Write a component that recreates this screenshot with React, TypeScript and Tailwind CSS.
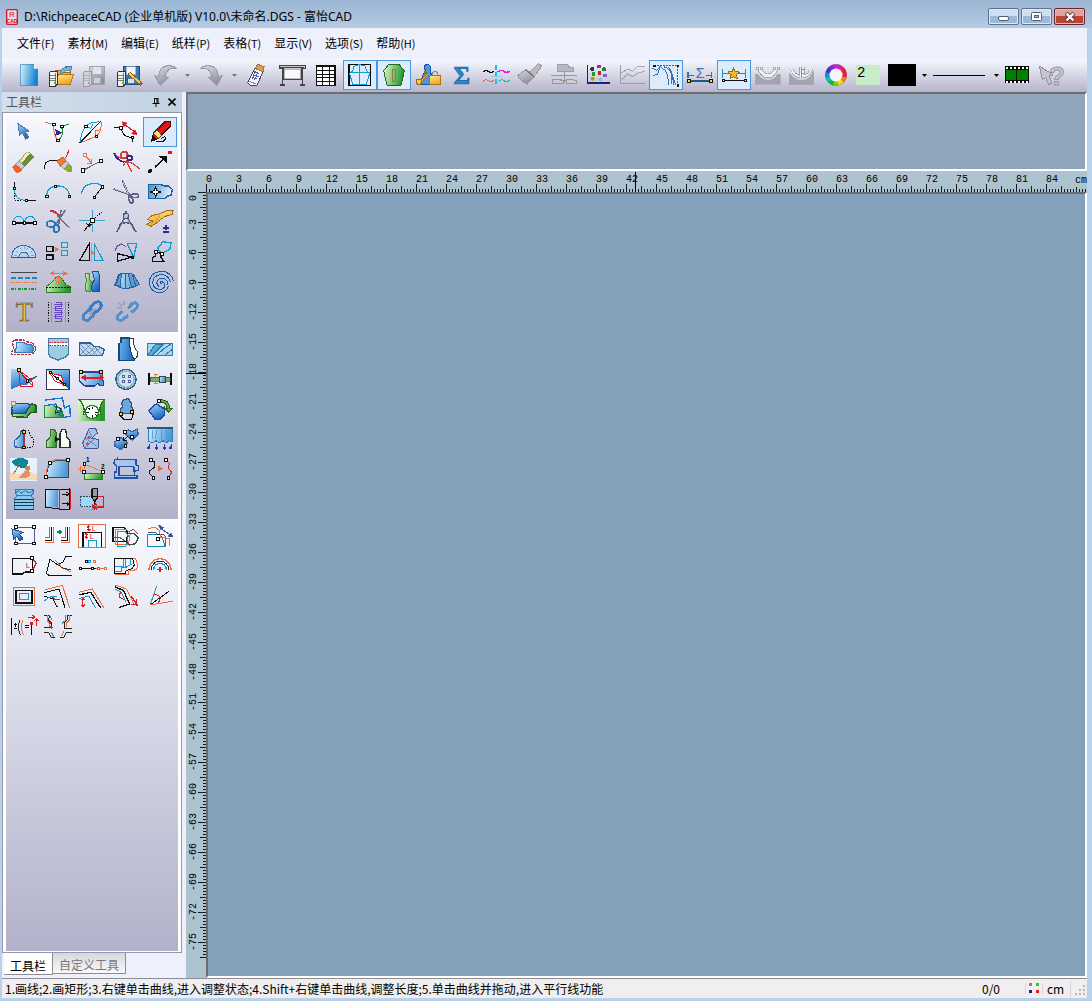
import { useState } from "react"
import type { ReactNode } from "react"

type Tool = {
  name: string
  art: ReactNode
}

// -------------------------
// Drawing helpers (a cell is 102 x 90 units, three to a pixel)
// -------------------------

function P({ d, c = "#111", f = "none", w = 3, dash }: { d: string; c?: string; f?: string; w?: number; dash?: string }) {
  return <path d={d} stroke={c} fill={f} strokeWidth={w} strokeDasharray={dash} />
}

function Nodes({ at, c = "#111", f = "#fff", r = 4 }: { at: number[][]; c?: string; f?: string; r?: number }) {
  return (
    <>
      {at.map(([x, y]) => (
        <rect key={`${x}-${y}`} x={x - r} y={y - r} width={r * 2} height={r * 2} fill={f} stroke={c} strokeWidth={3} />
      ))}
    </>
  )
}

function Dots({ at, r = 5 }: { at: [number, number, string][]; r?: number }) {
  return (
    <>
      {at.map(([x, y, c]) => (
        <circle key={`${x}-${y}`} cx={x} cy={y} r={r} fill={c} />
      ))}
    </>
  )
}

function Art({ children }: { children: ReactNode }) {
  return (
    <svg viewBox="0 0 102 90" className="h-[30px] w-[34px] shrink-0" shapeRendering="crispEdges" aria-hidden="true">
      {children}
    </svg>
  )
}

const BLUE = "url(#blue)"
const BLUE2 = "url(#blueDown)"
const GREEN = "url(#green)"
const GRAY = "url(#gray)"
const GOLD = "url(#gold)"

const ORANGE = "#f0703c"
const RED = "#dc1c24"
const CYAN = "#109cd0"
const NAVY = "#2c2c8c"
const STEEL = "#3870b0"
const YELLOW = "#f8ec20"

function Server({ gray = false }: { gray?: boolean }) {
  return (
    <>
      <P d="M13 38L20 33H38V72L32 78H13Z" c={gray ? "#9c9ca6" : "#333"} f={gray ? "#d4d4dc" : "#f4f4ee"} />
      <P d="M14 46H32M14 54H32M14 61H32M32 40V76" c={gray ? "#a4a4ac" : "#444"} w={2} />
      <rect x="26" y="67" width="5" height="5" fill={gray ? "#999" : "#18c818"} />
    </>
  )
}

function Scissors({ c = "#5c6488" }: { c?: string }) {
  return (
    <>
      <P d="M14 36L66 54M40 10L62 60" c={c} w={6} />
      <P d="M18 36L60 50M42 14L58 52" c="#e4e8f4" w={2} />
      <ellipse cx="78" cy="56" rx="11" ry="6" fill="none" stroke={c} strokeWidth="5" />
      <ellipse cx="66" cy="69" rx="6" ry="10" fill="none" stroke={c} strokeWidth="5" transform="rotate(-25 66 69)" />
    </>
  )
}

function Eraser() {
  return (
    <>
      <P d="M17 61L60 16Q64 13 68 17L81 29L37 76Z" c="#806c38" f="#e8e470" w={2} />
      <P d="M62 17L81 29L42 71L34 64Z" c="none" f="#68903c" />
      <P d="M50 27L62 15L69 20L44 47Z" c="none" f="#f8f4b0" />
      <P d="M36 42L53 58L43 68L26 53Z" c="#889" f="#c8ccd4" w={2} />
      <P d="M17 61L26 52L43 68L36 76L28 76Z" c="#d04010" f="#f86420" w={2} />
    </>
  )
}

// -------------------------
// Main toolbar
// -------------------------

const fileTools: Tool[] = [
  { name: "新建", art: <><P d="M29 13H70L80 24V77H29Z" c="#3c84c0" f="url(#page)" w={2} /><P d="M69 13V24H80Z" c="#fff" f="#d8f0ff" w={2} /></> },
  {
    name: "打开", art: <>
      <P d="M31 30H48L53 36H76V70H31Z" c="#a06c10" f="#f0b840" />
      <P d="M40 44H85L76 72H32Z" c="#b07818" f={GOLD} />
      <P d="M44 40Q48 20 66 24L60 19L81 18L77 36L72 31Q60 28 52 40Z" c="#40688c" f="#70b4dc" w={2} /><Server />
    </>
  },
  { name: "保存", art: <><P d="M30 18H77V72H30Z" c="#a0a0ac" f={GRAY} /><P d="M39 20H68V42H39Z" c="#aaa" f="#e4e4ec" w={2} /><P d="M42 52H65V71H42Z" c="#999" f="#ccd" w={2} /><Server gray /></> },
  {
    name: "另存为", art: <>
      <P d="M30 18H78V72H30Z" c="#204c78" f="#3878b4" /><P d="M40 20H68V44H40Z" c="#84a4c0" f="#f0f4fc" w={2} />
      <P d="M44 54H65V71H44Z" c="#204c78" f="#d8e0e8" w={2} /><Server />
      <P d="M47 38L82 70" c="#8c5c18" w={10} /><P d="M48 39L80 68" c="#f8c848" w={6} /><P d="M80 68L87 75" c="#c84c3c" w={9} />
    </>
  }
]

const undoArt = <P d="M88 25Q62 20 54 49L64 52L39 76L24 47L34 50Q38 16 66 17Q80 17 88 25Z" c="#9c9ca8" f={GRAY} />

const redoArt = <P d="M20 25Q46 20 54 49L44 52L69 76L84 47L74 50Q70 16 42 17Q28 17 20 25Z" c="#9c9ca8" f={GRAY} />

type ViewTool = Tool & { on?: boolean }

const viewTools: ViewTool[] = [
  {
    name: "橡皮擦", art: <>
      <P d="M20 68L42 25L66 35L48 76L28 77Z" c="#404468" f="#f4f6fc" /><P d="M42 25L50 13L69 20L66 36Z" c="#907c50" f="#f49830" />
      <P d="M39 36L55 41M35 44L53 50M32 52L49 57M43 32L33 58M51 36L41 60" c="#505c9c" w={3} /><P d="M25 64L45 72" c="#8890b0" />
    </>
  },
  {
    name: "绘图仪", art: <>
      <P d="M14 17H90V26H80L80 57H25L25 26H14Z" c="#444" f="#c8c8c8" /><P d="M28 28H76V56H28Z" c="#999" f="#f8f8fc" w={2} />
      <P d="M16 22H88" c="#444" w={3} /><P d="M22 26V74M82 26V74M16 75H30M76 75H90M22 58H82" c="#444" w={4} />
    </>
  },
  { name: "规格表", art: <><P d="M23 18H78V76H23Z" f="#fff" w={4} /><P d="M23 30H78M23 42H78M23 53H78M23 65H78M41 18V76M60 18V76" /></> },
  {
    name: "显示结构线", on: true, art: <>
      <P d="M18 13H82V76H18Z" c="#080808" w={4} /><P d="M50 13V76M20 38H80M33 19Q30 36 20 40L29 74H70L80 40Q68 34 68 19Q50 10 33 19" c={CYAN} />
    </>
  },
  { name: "显示样片", on: true, art: <><P d="M36 12H65L82 32L72 76H30L20 32Z" c="#206c20" f={GREEN} /><P d="M45 29H54V67M45 29V64H54" c="#a07838" /></> },
  {
    name: "加密", art: <>
      <P d="M43 31Q34 15 50 13Q64 16 57 33L62 45L85 50V72Q62 78 28 72L37 43Z" c="#1858a0" f="#4898e0" />
      <P d="M50 42L26 70M30 65L22 58M50 42l-12 -3" c="#a86c10" w={7} /><P d="M49 43L27 68" c="#f8c840" w={3} /><circle cx="24" cy="65" r="8" fill="#f8c840" stroke="#a06c10" strokeWidth="3" />
      <P d="M64 48V40Q72 28 80 40V48" c="#888" w={4} /><P d="M56 47H87V74H56Z" c="#b07010" f={GOLD} />
    </>
  },
  { name: "合计", art: <text x="50" y="71" textAnchor="middle" fontSize="76" fontFamily="Liberation Serif, serif" fontWeight="bold" fill="#208cd0" stroke="#185c9c" strokeWidth="2">Σ</text> },
  {
    name: "对称线", art: <>
      <P d="M12 36Q20 28 28 34T45 34" w={4} /><P d="M56 36Q66 28 74 34T92 34" c="#e818d0" w={4} /><P d="M12 64Q20 56 28 62T45 60" c="#d87078" /><P d="M58 64Q67 56 75 62T92 61" c="#20c0b0" />
      <P d="M51 14V76" c="#18bce8" w={5} dash="16 5" /><P d="M36 48H66" c="#90cce0" w={3} />
    </>
  },
  { name: "刷新", art: <><P d="M50 36L77 11L87 18L66 46" c="#999" f="#bbb" /><P d="M14 47L40 28L65 49L43 72Q24 66 14 47Z" c="#999" f={GRAY} /><P d="M38 30L65 51" c="#777" w={4} /></> },
  {
    name: "展开", art: <>
      <P d="M30 14H63L67 21H78V34H30Z" c="#a0a0ac" f="#b8b8c4" /><P d="M12 46H90M51 34V66M43 58L51 67L59 58" c="#999" /><P d="M17 57H37L42 62H48V71H17ZM57 57H78L82 62H88V71H57Z" c="#999" f="#ccccd6" />
    </>
  },
  {
    name: "散点图", art: <>
      <P d="M19 14V68H87" c="#202070" w={5} />
      <Dots at={[[34, 27, "#333"], [54, 20, "#b020a0"], [69, 28, "#208030"], [38, 42, "#18a030"], [56, 39, "#c02828"], [72, 47, "#8060d0"], [35, 56, "#b89020"], [58, 58, "#70d0d0"]]} r={6} />
    </>
  },
  { name: "曲线图", art: <><P d="M17 14V70H90" c="#9c9ca8" w={4} /><P d="M20 39L38 27L52 34L68 20L90 19M20 59L38 42L53 50L70 38L90 34" c="#a8a8b0" /></> },
  {
    name: "自动标注", on: true, art: <>
      <P d="M16 17H86M85 17V76" w={2} dash="6 3" /><P d="M10 25L24 31L34 18M34 18L26 42L11 47M34 18L40 26Q58 30 58 74M44 20Q66 26 68 48L66 72M56 20Q70 30 74 75M64 28L80 76" c={STEEL} w={3} /><Nodes at={[[16, 17], [86, 17], [86, 76]]} f="#080808" r={2} />
    </>
  },
  {
    name: "线长", art: <>
      <P d="M15 36V55M86 36V55M15 46H34M68 46H86" c={STEEL} w={4} /><text x="51" y="53" textAnchor="middle" fontSize="42" fontFamily="Liberation Sans, sans-serif" fill="#3870b0">Σ</text><P d="M15 63H86" c="#205888" w={5} /><Nodes at={[[17, 63], [84, 63]]} f={YELLOW} />
    </>
  },
  {
    name: "显示线长", on: true, art: <>
      <P d="M17 28V53M86 28V53M17 40H38M63 40H86" c="#1898b8" w={4} /><P d="M50 24L55 35L67 36L58 44L61 56L50 50L39 56L42 44L33 36L45 35Z" c="#907020" f="#fcbc20" /><P d="M19 62H84" w={3} /><Nodes at={[[19, 62], [84, 62]]} r={3} />
    </>
  },
  { name: "凹形", art: <><P d="M12 42H20Q30 60 50 61Q72 60 80 42H87V73H12Z" c="#a8a8b2" f="#a4a4ae" w={2} /><P d="M25 25Q34 47 51 48Q68 47 76 25" c="#a4a4ae" w={14} /><P d="M25 25Q34 47 51 48Q68 47 76 25" c="#f0f0f4" w={9} /><Nodes at={[[18, 26], [32, 26], [69, 26], [82, 26]]} c="#aaa" r={3} /></> },
  { name: "分割", art: <><P d="M13 38Q28 60 43 61H56Q74 58 86 34V74H13Z" c="#a8a8b2" f="#a4a4ae" w={2} /><P d="M20 27Q28 48 46 50V22M80 27Q72 48 54 50V22" c="#a4a4ae" w={10} /><P d="M20 27Q28 48 46 50V22M80 27Q72 48 54 50V22" c="#f0f0f4" w={5} /><P d="M50 20V55M50 28H60M50 39H58" c="#909098" /></> }
]

// -------------------------
// Tool palette
// -------------------------

const drawTools: Tool[] = [
  { name: "选择", art: <P d="M33 20L38 55L46 47L56 66L65 61L55 44L66 42Z" c="#5078a8" f={BLUE2} /> },
  {
    name: "调整", art: <>
      <P d="M12 17L38 20Q36 50 50 70" c={ORANGE} /><P d="M84 21L62 28Q70 58 50 70" c="#208838" /><P d="M43 38L62 47L43 55L48 47Z" c={NAVY} f={NAVY} /><Nodes at={[[39, 22], [62, 28], [50, 70]]} />
    </>
  },
  {
    name: "合并调整", art: <>
      <P d="M14 78L78 12" w={3} /><P d="M72 15Q42 14 34 28Q18 42 16 76" c={CYAN} /><P d="M34 28L48 34L54 22" c={CYAN} /><P d="M78 14Q82 44 63 58L17 77M63 58L60 42L76 38" c={ORANGE} /><Nodes at={[[32, 28], [64, 58]]} />
    </>
  },
  { name: "对称调整", art: <><P d="M14 30L36 32Q41 63 70 61L72 76" /><P d="M46 22L80 47" c={RED} w={4} /><P d="M38 14L55 18L45 29ZM84 53L68 50L78 38Z" c={RED} f={RED} w={2} /><Nodes at={[[36, 32], [70, 61]]} /></> },
  {
    name: "智能笔", art: <>
      <P d="M54 65Q68 54 68 65Q62 78 38 74" /><P d="M25 73L31 49L66 13L82 14L82 28L46 64Z" c="#401010" f="#e01818" /><P d="M31 49L43 40L56 55L46 64Z" c="#604820" f="#f8e070" w={2} /><P d="M25 73L29 58L39 67Z" f="#111" /><P d="M43 40L67 15" c="#801010" w={3} /><P d="M64 46L82 28" c="#300" w={5} />
    </>
  },
  { name: "橡皮擦", art: <Eraser /> },
  { name: "擦除线段", art: <><P d="M10 66Q10 42 28 41L56 42" /><P d="M84 10Q79 22 73 34" c={RED} /><P d="M47 41L66 30L76 42L60 60Z" c="#a04010" f="#f87830" w={2} /><P d="M76 42L60 58L68 66L84 49Z" c="#889" f="#ccd" w={2} /><P d="M84 49L92 58V75H80L68 66Z" c="none" f="#90a840" /></> },
  { name: "加点", art: <><P d="M24 70L78 42" c="#666" /><P d="M34 29L48 46M50 36V50H36" c={ORANGE} w={4} /><Nodes at={[[30, 24]]} c={ORANGE} r={5} /><Nodes at={[[24, 70], [78, 42]]} r={5} /></> },
  {
    name: "剪断线", art: <>
      <P d="M16 18Q28 38 50 32M52 43L70 49L92 65M43 58L48 48L52 43L68 74" c="#d83c40" w={4} /><P d="M15 18Q20 38 46 46" c={NAVY} w={5} /><circle cx="46" cy="24" r="10" fill="none" stroke="#d83c40" strokeWidth="6" /><circle cx="62" cy="33" r="7" fill="none" stroke={NAVY} strokeWidth="6" />
    </>
  },
  { name: "连接点", art: <><P d="M36 60L65 34" w={5} /><P d="M52 29H71V47Z" f="#111" /><Dots at={[[21, 72, "#111"], [81, 17, "#f01010"]]} r={6} /></> },
  { name: "圆角", art: <><P d="M22 15V70H58" dash="4 4" /><P d="M22 15V34M58 70H86" /><P d="M22 34Q22 70 58 70" c={CYAN} /><Nodes at={[[22, 34], [58, 70]]} r={3} /></> },
  { name: "三点弧线", art: <><P d="M17 58C16 16 86 16 85 58" c={CYAN} w={4} /><Nodes at={[[17, 58], [43, 28], [85, 58]]} /></> },
  { name: "角度线", art: <><P d="M19 50C25 14 70 14 82 29" c={CYAN} w={4} /><P d="M82 29L58 61" /><Nodes at={[[82, 29], [58, 61]]} /></> },
  { name: "剪刀", art: <Scissors /> },
  { name: "拾取样片", art: <><P d="M17 23H54L65 27H77L88 37L84 55L71 58L65 65H17Z" c="#1c609c" f="url(#piece)" w={4} /><P d="M38 29L42 41L54 45L42 49L38 61L34 49L22 45L34 41Z" f="#fff" /></> },
  { name: "等分规", art: <><P d="M18 48C16 22 52 22 52 48C52 22 88 22 85 48" c={CYAN} w={3} /><P d="M18 48H86" w={4} /><Nodes at={[[20, 48], [52, 48], [84, 48]]} /></> },
  {
    name: "剪断", art: <>
      <P d="M28 12Q45 12 55 28" c="#e02830" w={6} /><P d="M50 28L86 62" c="#90686c" w={4} /><P d="M73 9L42 56M60 9L52 56" c="#5c7098" w={5} /><ellipse cx="30" cy="51" rx="13" ry="9" fill="none" stroke="#2878b8" strokeWidth="6" /><ellipse cx="46" cy="65" rx="8" ry="11" fill="none" stroke="#2878b8" strokeWidth="6" />
    </>
  },
  { name: "垂直线", art: <><P d="M12 40H90M52 10V76" c="#30a8cc" /><P d="M27 72L52 40M34 49L42 58L50 51" /><P d="M54 38L84 12" dash="4 4" /><Nodes at={[[52, 40]]} r={5} /></> },
  { name: "圆规", art: <><P d="M51 12V25M50 28L23 75M52 28L81 75M31 54Q51 38 72 55" c="#505878" w={5} /><P d="M48 35L33 61M54 35L70 61" c="#a4b8dc" w={2} /><circle cx="51" cy="27" r="8" fill="#adc4e4" stroke="#505878" strokeWidth="4" /></> },
  { name: "比较长度", art: <><P d="M14 38Q20 24 48 21L72 11H90L87 23Q65 24 42 47L24 58L12 52L30 42Z" c="#a06818" f={GOLD} /><P d="M20 53Q40 42 52 23M33 26L49 45" c="#e4a028" /><P d="M61 63H77M69 53V70M61 75H77" c={NAVY} w={4} /></> },
  { name: "量角器", art: <><P d="M14 62Q15 27 50 25Q85 28 87 62H65Q62 45 50 45Q38 45 35 62Z" c="#3c6cac" f="#c0dcf4" /><P d="M12 62H88" c="#2858a0" w={4} /><P d="M22 56L29 57M27 42L34 47M39 32L43 39M51 28V36M63 32L59 39M76 42L69 47M81 56L73 57" c="#6088b8" w={2} /></> },
  { name: "旋转复制", art: <><P d="M16 28H36V43H16ZM17 54H36V68H17Z" w={4} /><P d="M60 17H80V30H60ZM60 41H80V55H60Z" c={CYAN} /><P d="M42 31L53 37L42 43Z" c={ORANGE} f={ORANGE} /></> },
  { name: "对称复制", art: <><P d="M43 20V70H14Z" w={4} /><P d="M58 20V70H84Z" c={CYAN} /><P d="M48 40L57 47L48 54Z" c={ORANGE} f={ORANGE} /><P d="M50 18V74" c="#999" w={2} /></> },
  { name: "移动复制", art: <><P d="M25 50L69 60L25 73Z" w={4} /><P d="M55 20H83L74 62Z" c={CYAN} w={4} /><P d="M19 42Q22 24 38 21M21 31L36 21L50 28" c="#7050a8" w={4} /><Nodes at={[[70, 62]]} r={3} f="#111" /></> },
  { name: "对接", art: <><P d="M44 34L60 14L84 18L80 38L56 50Z" c={CYAN} w={4} /><P d="M38 45L56 50L54 62L64 74H28V61L38 57Z" w={4} /><Nodes at={[[38, 44], [56, 51]]} /></> },
  { name: "线型", art: <><P d="M12 17H90" c="#444" w={4} /><P d="M12 33H90" c="#1888c8" w={4} dash="16 5" /><P d="M12 47H90" c={ORANGE} w={4} dash="5 3" /><P d="M12 66H90" c="#189828" w={4} dash="9 4 3 4" /></> },
  { name: "褶展开", art: <><P d="M15 75V59L31 48L45 31Q52 28 59 31L76 55L89 59V75Z" c="#288028" f={GREEN} /><P d="M15 61H89" dash="5 4" /><P d="M53 28V50M39 33L48 48M66 33L58 48" c={ORANGE} /><P d="M34 19H71" c={ORANGE} w={4} /><P d="M28 19L38 14V24ZM78 19L68 14V24Z" c={ORANGE} f={ORANGE} /></> },
  { name: "分割展开", art: <><P d="M31 18H42L45 39L54 46V64L45 75L31 71V53L35 45Z" c="#488830" f={GREEN} /><P d="M52 13H69L73 25V73H52L49 59L58 38Z" c="#2048a0" f={BLUE2} /></> },
  { name: "荷叶边", art: <><P d="M29 22L39 19L64 19L74 24L91 52L75 60L57 64H43L17 55Z" c="#28649c" f={BLUE} /><P d="M37 23L34 59L20 54L31 25ZM57 20L68 60L80 56L71 25" c="#28649c" f="#6898cc" /><P d="M48 20V63" c="#28649c" /></> },
  { name: "螺旋", art: <><P d="M87 44Q80 17 52 18Q24 22 24 48Q27 73 54 72Q73 68 70 49Q64 35 49 41Q43 48 52 55" c="#28549c" w={13} /><P d="M87 44Q80 17 52 18Q24 22 24 48Q27 73 54 72Q73 68 70 49Q64 35 49 41Q43 48 52 55" c="#a4c8ec" w={7} /></> },
  { name: "加文字", art: <text x="52" y="73" textAnchor="middle" fontSize="84" fontFamily="Liberation Serif, serif" fill="#ecc040" stroke="#605028" strokeWidth="2">T</text> },
  { name: "比例尺", art: <><P d="M23 14V76M81 14V76" dash="4 4" /><P d="M31 15V75M74 15V75" c="#38b8d8" /><P d="M44 16H62V28H44V40H62V52H44V64H62V74H42M40 22H66M40 34H66M40 46H66M40 58H66" c="#6848c8" /></> },
  {
    name: "链接", art: <>
      <rect x="22" y="43" width="38" height="22" rx="11" fill="none" stroke="#4888c4" strokeWidth="9" transform="rotate(-44 41 54)" /><rect x="43" y="20" width="38" height="22" rx="11" fill="none" stroke="#3c7cc0" strokeWidth="9" transform="rotate(-44 62 31)" /><P d="M42 53L61 35" c="#a4a4b0" w={8} />
    </>
  },
  { name: "断开链接", art: <><path d="M40 42L28 54Q20 66 32 70Q38 72 58 55M57 34L70 20Q83 13 85 25Q86 33 66 47" fill="none" stroke="#5890c8" strokeWidth="9" /><P d="M45 13V25M25 33H38M29 18L39 28" c="#a4a4b0" w={6} /></> }
]

const patternTools: Tool[] = [
  { name: "缝份", art: <><P d="M16 23L23 18H51L62 24L76 25L88 45L80 57L68 62H13L15 53L20 42Z" c="#d02828" w={4} dash="8 3" /><P d="M28 25H49L61 31H74L80 44L75 55H24V47L29 42Z" c="#3878bc" f={BLUE} w={4} /></> },
  { name: "袋", art: <><P d="M23 13H83V61L73 70L51 78L29 70L23 61Z" c="#4878a0" f="#9cccdf" w={4} /><P d="M25 26H81V35H25Z" c="none" f="#fff" /><P d="M24 26H82M24 35H82" c={RED} dash="5 3" /></> },
  { name: "面料", art: <><P d="M14 27H48L57 38H71L88 47L82 65H14Z" c="#3c5c88" f="#c0d8f0" w={4} /><P d="M14 42L35 64M14 28L50 64M31 27L67 64M49 29L82 63M31 64L65 37M14 64L49 29M50 64L76 40" c="#4870a0" w={2} /></> },
  { name: "衣身", art: <><P d="M30 79V29L36 25V12H61Q59 48 73 57L76 79Z" c="#184878" f="url(#body)" w={4} /><P d="M61 13H74Q72 37 84 52V68L78 76Q62 62 61 13Z" c="#1a3c58" f="#fff" w={3} /></> },
  { name: "分割片", art: <><P d="M13 29H89V65H13Z" c="#3878b8" f="#a8d8f0" w={3} /><P d="M14 63L38 30H61L27 64M41 64L65 42L84 30M64 64L88 46" c="#2878b0" f="#58acd8" /></> },
  { name: "剪口", art: <><P d="M13 14H38L61 50L90 38L60 62L40 64L13 76Z" c="none" f={BLUE2} /><P d="M35 18L40 66L77 66L74 48ZM35 18L77 66" c={RED} w={3} /><P d="M35 18L61 51L90 36" c="#345" /><Nodes at={[[35, 18], [61, 51]]} f={YELLOW} /></> },
  { name: "省", art: <><P d="M16 17H86V76H16Z" c="#335" f={BLUE2} /><P d="M17 19L17 75L84 75Z" c="none" f="#fff" /><P d="M27 27L61 35L70 62L42 52Z" c={RED} f="#fff" /><P d="M27 26L50 44L70 61" /><Nodes at={[[27, 26], [50, 44], [70, 61]]} f={YELLOW} r={3} /></> },
  { name: "布纹线", art: <><P d="M18 24H79L83 30V48L86 52V65H75L68 58L60 66H30L20 57L13 50V34Z" c="#303c90" f={BLUE} w={4} /><P d="M25 41H80" c={RED} w={5} /><P d="M19 41L30 35V47ZM86 41L75 35V47Z" c={RED} f={RED} /><Nodes at={[[18, 24], [77, 24]]} f={YELLOW} /></> },
  { name: "扣眼", art: <><circle cx="51" cy="46" r="30" fill="#a8ccf0" stroke="#28609c" strokeWidth="4" /><circle cx="51" cy="46" r="24" fill="#d0e4f0" stroke="#90b498" strokeWidth="4" /><Nodes at={[[43, 37], [60, 37], [43, 53], [60, 53]]} c="#505cac" r={3} /></> },
  { name: "钮扣", art: <><P d="M18 45H84M18 28V62M84 28V62" c="#080808" w={4} /><P d="M21 40H81V51H21Z" c="#244828" f="#7cb060" w={2} /><P d="M49 36H66V54H49Z" c="#345" f={BLUE} /><P d="M38 30V60M34 31H44M34 59H44" c="#cc8c20" w={4} /></> },
  { name: "拼接", art: <><P d="M16 68L60 70L70 56L87 54V34L75 30L57 37V45H14Z" c="#245c1c" f={GREEN} w={4} /><P d="M19 29H64L71 33L63 44L55 59H18L14 44Z" c="#1c4c70" f={BLUE2} w={4} /><Nodes at={[[18, 27]]} c={ORANGE} f="#fcd8c0" r={6} /></> },
  { name: "对位", art: <><P d="M11 35L38 31L51 52L61 45L69 71H10Z" c="#188c30" f={GREEN} /><P d="M13 18L64 12L70 42L86 35L88 67L65 71L54 62L61 45L49 39L44 30L12 35" c="#1478c8" w={4} /><P d="M48 34L43 58L53 54M55 38L61 54" c="#123c38" /></> },
  { name: "纸样对称", art: <><P d="M10 17H90V80H10Z" c="none" f={GREEN} /><P d="M11 16Q33 35 26 61H77Q69 36 88 16Z" c="#287028" f="#eaf6e4" w={4} /><circle cx="51" cy="54" r="20" fill="#fff" stroke="#238028" strokeWidth="4" /><P d="M51 38V45M51 63V71M34 54H41M61 54H68M40 42L45 47M61 61L65 66" /></> },
  { name: "展开片", art: <><P d="M43 17L57 14L68 28L66 38L72 45L68 58H35L34 47L41 39L38 29Z" c="#3c4c84" f="#6ca8dc" w={4} /><P d="M37 57L36 68L45 76H68L73 58" /><Nodes at={[[36, 59], [69, 54]]} f={YELLOW} /></> },
  { name: "旋转纸样", art: <><P d="M18 50L40 29L60 43L65 39V61L51 77H37Z" c="#2848a0" f={BLUE2} w={4} /><P d="M50 19Q77 12 80 44L88 43L77 55L66 44L73 44Q69 22 53 25" c="#256320" f="#65a63c" w={3} /><Nodes at={[[47, 21]]} r={5} /></> },
  { name: "半片", art: <><P d="M49 18L42 23L39 34L22 50V68L51 73V20Z" c="#3060a0" f={BLUE} w={4} /><P d="M51 21V72" c={RED} w={4} dash="5 4" /><P d="M54 20H65L69 34L80 45L79 68L59 72" dash="4 4" /><Nodes at={[[51, 24], [51, 70]]} f={YELLOW} /></> },
  { name: "衣片对接", art: <><P d="M29 17H40L47 26V70H15V52L27 40Z" c="#316626" f={GREEN} /><P d="M62 17H74L77 39L87 51V70H57V29Z" c="#26322a" f="#f5fff4" w={4} /><P d="M42 38L54 46L42 54ZM54 46H61" f="#111" w={2} /></> },
  { name: "折叠", art: <><P d="M42 15L62 14L67 27L50 43L69 46L72 64L68 74H29L23 58Z" c="#415a93" f="#a4c6ed" /><P d="M31 42L67 68M40 18L55 46L30 73" c="#4c6298" w={2} /><Dots at={[[42, 41, "#c84858"], [37, 60, "#c84858"]]} r={5} /></> },
  { name: "拼合检查", art: <><P d="M17 54L36 40L55 57L36 77L18 67Z" c="#3668a5" f={BLUE2} w={4} /><P d="M45 25L60 18L69 24L84 15L88 31L70 49L58 38Z" c="#3668a5" f={BLUE2} w={4} /><P d="M44 48L57 36M43 39V49H54" w={3} /><Nodes at={[[26, 44], [49, 65], [47, 24], [68, 39]]} /></> },
  { name: "裙褶", art: <><P d="M16 11H87V53L77 50L71 57L60 50L49 57L39 50L28 57L18 53Z" c="#2c80b8" f={BLUE} /><P d="M29 17V46M42 17L37 44M54 17V48M69 17L72 46" c="#488cb8" w={2} /><P d="M13 12H90" c="#275680" w={5} /><Dots at={[[18, 72, "#263cbc"], [40, 72, "#263cbc"], [64, 72, "#263cbc"], [84, 72, "#263cbc"]]} r={5} /><P d="M18 61V70M40 61V70M64 61V70M84 61V70" c="#263cbc" /></> },
  { name: "沙滩", art: <><rect x="9" y="11" width="82" height="69" fill="#e4f4fc" /><path d="M10 55Q41 65 57 50L91 61V79H10Z" fill="#fadab4" /><path d="M13 25Q35 2 63 19L60 43Q31 45 13 25Z" fill="#07879a" /><P d="M38 27L20 60" c="#ba672d" /><circle cx="62" cy="43" r="8" fill="#d68358" /><path d="M54 50Q72 46 70 65Q56 76 37 71Z" fill="#dc936a" /></> },
  { name: "圆弧片", art: <><P d="M16 70Q18 20 55 18H83V70Z" c="#444" f={BLUE} w={3} /><P d="M15 65Q18 14 55 16H82" c={ORANGE} /><Nodes at={[[15, 68], [26, 27], [80, 18]]} /></> },
  { name: "放缩", art: <><P d="M27 58H83V76H27Z" c="#367727" f={GREEN} /><P d="M28 30L84 54M29 32V52M16 35V51M10 43L16 51L22 43" c={ORANGE} w={3} dash="6 2" /><Nodes at={[[28, 30], [27, 54], [83, 54]]} /><text x="33" y="24" fontSize="19" fontWeight="bold" fontFamily="Liberation Sans, sans-serif">1</text><text x="78" y="44" fontSize="19" fontWeight="bold" fontFamily="Liberation Sans, sans-serif">2</text></> },
  { name: "缝纫", art: <><P d="M17 16H81V32L88 36V49L75 52L72 37H30V64H84V73H16V54H22V36L15 29Z" c="#244ea0" f="#a6c7ea" w={4} /><P d="M26 16V10M77 38V64M18 72H86" c="#23519e" w={4} /></> },
  { name: "曲线替换", art: <><P d="M23 18L35 24V39L20 51V59L31 70" /><P d="M68 18L80 29L75 41L86 55L76 71" c={RED} /><P d="M47 37L58 44L47 50Z" c={ORANGE} f={ORANGE} /><Nodes at={[[24, 18], [31, 72], [69, 18], [76, 72]]} /></> },
  { name: "水平褶", art: <><P d="M24 28V16H78V28L72 34L80 45V75H22V45L31 34Z" c="#337aa6" f="#8bc8ec" /><P d="M25 27L34 20L44 27L55 20L66 27L78 20M28 35H74" c="#2983bb" /><P d="M22 46H80M22 55H80M22 65H80M22 75H80" c="#123c52" w={3} /></> },
  { name: "平行展开", art: <><P d="M13 17H55L85 15V75H54L13 69Z" w={3} /><P d="M15 19H52V71L15 67Z" c="none" f={BLUE} /><P d="M56 16V75M89 14V76" c={RED} w={4} /><P d="M62 30H83M77 24L84 30L77 36M62 59H83M77 53L84 59L77 65" w={3} /></> },
  { name: "切割", art: <><P d="M17 38H61V68H17Z" c="#234b64" f="#9dd8fa" dash="5 3" /><P d="M66 38H85V69H66" c={RED} w={4} /><P d="M53 13H67V41L59 53L51 40V17Z" f="#999" w={4} /><P d="M53 38H67M59 51V61" /><P d="M59 60V79M50 70H69M52 62L66 77M66 62L52 77" c={RED} /></> }
]

const gradeTools: Tool[] = [
  { name: "选择放码", art: <><P d="M26 19H81V67H26Z" c="#5c579c" w={3} /><P d="M15 24L48 34L38 40L48 53L39 59L29 46L20 54Z" c="#244b96" f={BLUE2} /><Nodes at={[[26, 18], [81, 18], [26, 67], [81, 67]]} /></> },
  { name: "平行复制", art: <><P d="M36 18V65H13M86 18V65H59" c={ORANGE} /><P d="M30 18V58H13M79 18V58H59" w={3} /><P d="M24 18V50H13M72 18V50H59" c={CYAN} /><P d="M47 33H61M55 27L62 33L55 39" c="#168064" w={4} /></> },
  { name: "档差", art: <><P d="M11 10H92V80H11Z" c="#e46c40" w={4} /><P d="M24 78V34H79V78" w={4} /><P d="M40 78V58H64V78" c={CYAN} /><P d="M41 14V28M36 19L41 14L46 19M36 24L41 29L46 24M34 36V52M30 41L34 36L38 41M30 47L34 52L38 47" c={RED} w={3} /><text x="50" y="29" fontSize="22" fontFamily="Liberation Sans, sans-serif" fill={RED}>L</text><text x="44" y="54" fontSize="22" fontFamily="Liberation Sans, sans-serif" fill={RED}>L</text></> },
  { name: "拷贝点放码", art: <><P d="M12 20H46L56 33L53 61H12Z" w={4} /><P d="M20 26H53L64 38L58 71H20Z" c={ORANGE} /><P d="M26 31H49L58 45L51 75H26Z" c={CYAN} /><P d="M56 37L76 37L88 50L80 68L61 72L52 63" c="#3b5048" w={4} /><P d="M12 48L33 50L47 59M60 32L73 25L87 39" c="#555" /></> },
  { name: "旋转放码", art: <><P d="M14 40H48L58 49L66 76H14Z" c="#1589be" w={3} /><P d="M14 36L35 33L42 40H62L66 46V76" w={2} /><P d="M14 24L35 18L50 29L52 48L80 53V75" c={ORANGE} /><P d="M54 22L84 44" c="#284ea2" w={3} /><P d="M47 12L62 20L54 26ZM90 48L75 46L84 36Z" c="#284ea2" f="#284ea2" w={2} /><Nodes at={[[45, 53]]} /></> },
  { name: "按线", art: <><P d="M17 22H66L76 20V63H54L47 69H17Z" w={4} /><P d="M78 22L87 38L78 54" c={RED} w={4} /><text x="56" y="50" fontSize="24" fontFamily="Liberation Sans, sans-serif" fill={RED}>L</text><Nodes at={[[75, 21], [75, 60]]} /></> },
  { name: "肩斜线", art: <><P d="M92 16H74L66 34L48 40L27 25L16 68L24 73H92" w={3} /><P d="M44 28L62 50L91 63" c={ORANGE} w={3} /><P d="M52 42L67 52L91 56" c="#333" /></> },
  { name: "各码对齐", art: <><P d="M15 52H64" w={4} /><P d="M64 52H90" c={ORANGE} w={3} /><Nodes at={[[16, 52], [52, 52]]} r={3} /><Nodes at={[[70, 52], [44, 31]]} c={CYAN} r={3} /><Nodes at={[[90, 52], [58, 31]]} c={ORANGE} r={3} /><Nodes at={[[34, 31]]} r={3} /></> },
  { name: "肩斜", art: <><P d="M17 70H58L60 60L82 56L87 44L80 23H17" c={ORANGE} w={3} /><P d="M17 23V68H50V60L70 52L76 42L71 23Z" /><P d="M43 23V45H17M49 23V50H36V60H17M63 23L66 40L49 50" c={CYAN} /></> },
  { name: "等角", art: <><path d="M18 56A33 33 0 0 1 84 56" stroke={ORANGE} strokeWidth="4" fill="none" /><path d="M25 56A26 26 0 0 1 77 56" stroke="#222" strokeWidth="3" fill="none" /><path d="M32 56A19 19 0 0 1 70 56" stroke={CYAN} strokeWidth="4" fill="none" /><P d="M43 56H59M51 48V64" c={RED} w={4} /></> },
  { name: "矩形放码", art: <><P d="M18 20H83V73H18Z" c={ORANGE} w={3} /><P d="M27 28H75V66H27Z" w={4} /><P d="M37 37H64V56H37Z" c={CYAN} /></> },
  { name: "角对齐", art: <><P d="M11 27L64 13L86 80" c={ORANGE} w={3} /><P d="M10 35L54 24L72 80M10 46L35 53L49 78" w={3} /><P d="M10 61Q25 43 48 46" c={CYAN} /><path d="M34 47Q38 59 56 54" stroke={RED} strokeWidth="3" fill="none" /></> },
  { name: "平行交点", art: <><P d="M11 34L52 24L86 80" c={ORANGE} w={3} /><P d="M11 42L47 34L77 80" w={4} /><P d="M11 53L41 45L61 80" c={CYAN} w={3} /><P d="M23 52V77M17 58L23 52L29 58M17 71L23 77L29 71" c={RED} w={3} /></> },
  { name: "辅助线平行", art: <><P d="M18 12L52 24L75 70" c={ORANGE} w={3} /><P d="M18 18L43 28L62 69L31 79" w={4} /><P d="M17 24L35 32L51 62" c={CYAN} w={3} /><path d="M36 33Q22 49 45 55" stroke={RED} strokeWidth="3" fill="none" /><P d="M67 45L84 72M66 70L84 72L82 53" c={RED} w={4} /></> },
  { name: "等分角", art: <><P d="M21 72L79 30" w={3} /><P d="M21 72L42 14" c={CYAN} w={3} /><P d="M21 72L89 61" c={ORANGE} w={3} /><path d="M34 41Q61 43 46 65" stroke={RED} strokeWidth="3" fill="none" /></> },
  { name: "输入放码量", art: <><P d="M14 22V73M72 40V73M20 41H30M25 35V47M20 53H30M54 43H65M54 50H65" w={3} /><P d="M39 27Q28 49 41 73" c="#222" /><P d="M48 27Q37 49 50 73" c={ORANGE} w={3} /><P d="M62 18H82M76 12L83 18L76 24M88 45V24M82 30L88 23L94 30" c={RED} w={3} /><Nodes at={[[72, 36]]} c={RED} f={RED} r={3} /></> },
  { name: "对应线", art: <><P d="M10 13H25L23 28L32 36V49L10 51M92 13H79L78 28L69 36V51H92M10 63H23L31 79H42M92 63H77L68 79H57" c="#222" w={3} /><P d="M18 12V28L25 36V48M84 12L85 28L77 36V48M30 63L38 79M69 61L61 75" c={ORANGE} /><P d="M26 12L33 28M73 12V29L62 38M31 65L39 76" c={CYAN} w={3} /><Dots at={[[28, 36, RED], [31, 49, RED]]} r={4} /></> }
]

const menus = ["文件(F)", "素材(M)", "编辑(E)", "纸样(P)", "表格(T)", "显示(V)", "选项(S)", "帮助(H)"]

// -------------------------
// Rulers
// -------------------------

function Ruler({ vertical = false }: { vertical?: boolean }) {

  const count = vertical ? 255 : 640
  const marks: string[] = []
  const labels: number[] = []

  for (let i = 0; i <= count; i++) {
    const pos = i * 3
    const size = i % 10 === 0 ? 8 : i % 5 === 0 ? 6 : 3
    marks.push(vertical ? `M${20 - size} ${pos}h${size}` : `M${pos + 20} ${20 - size}v${size}`)
    if (i % 10 === 0) labels.push(i / 10)
  }

  return (
    <svg className={vertical ? "h-full w-5" : "h-5 w-full"} fontFamily="Liberation Mono, monospace" fontSize="10" shapeRendering="crispEdges">
      <path d={marks.join("")} stroke="#101820" transform={vertical ? "translate(0 0.5)" : "translate(0.5 0)"} />
      {labels.map((n) =>
        vertical ? (
          <text key={n} transform={`translate(10 ${n * 30 + 9}) rotate(-90)`}>{n === 0 ? 0 : -n * 3}</text>
        ) : (
          n < 29 && <text key={n} x={n * 30 + 20} y="10">{n * 3}</text>
        )
      )}
      {vertical ? <path d="M0 181.5H20" stroke="#000" /> : <path d="M449.5 0V20" stroke="#000" />}
    </svg>
  )
}

function Palette({ tools, active, onPick, pad = "pt-0", grow }: { tools: Tool[]; active: string; onPick: (id: string) => void; pad?: string; grow?: boolean }) {
  return (
    <div
      className={`grid auto-rows-[30px] grid-cols-5 content-start bg-linear-to-b from-[#f8faff] to-[#b2b1ca] px-px pb-[5px] ${pad} ${grow ? "flex-1" : ""}`}
    >
      {tools.map((t) => (
        <button
          key={t.name}
          aria-label={t.name}
          onClick={() => onPick(t.name)}
          className={`flex items-center justify-center ${active === t.name ? "bg-[#d8eafc] outline outline-[#4898e0] -outline-offset-1" : ""}`}
        >
          <Art>{t.art}</Art>
        </button>
      ))}
    </div>
  )
}

function Caret({ gray = false }: { gray?: boolean }) {
  return (
    <svg viewBox="0 0 5 3" className="h-[3px] w-[5px]" aria-hidden="true">
      <path d="M0 0H5L2.5 3Z" fill={gray ? "#777784" : "#000"} />
    </svg>
  )
}

function Gradients() {

  const stops: [string, string, string, boolean][] = [
    ["blue", "#d4ecfc", "#4c98dc", false],
    ["blueDown", "#a4d8fc", "#1c68c0", true],
    ["page", "#d4f0fc", "#1484d0", false],
    ["piece", "#4890cc", "#dcecfc", false],
    ["body", "#70b4ec", "#1c6cc0", false],
    ["green", "#e4f8d0", "#28982c", false],
    ["gray", "#dcdce4", "#9090a0", true],
    ["gold", "#ffe88c", "#eca828", true]
  ]

  return (
    <svg className="absolute size-0" aria-hidden="true">
      <defs>
        {stops.map(([id, a, b, down]) => (
          <linearGradient key={id} id={id} x1="0" y1="0" x2={down ? "0.4" : "1"} y2={down ? "1" : "0.2"}>
            <stop offset="0" stopColor={a} />
            <stop offset="1" stopColor={b} />
          </linearGradient>
        ))}
      </defs>
    </svg>
  )
}

export default function App() {

  const [tool, setTool] = useState("智能笔")
  const [tab, setTab] = useState("工具栏")
  const [step, setStep] = useState("2")

  const wheel = ["#f02020", "#f88010", "#f8e010", "#70d818", "#10b838", "#10c0b0", "#1888e8", "#3038e0", "#8028e0", "#c020d8", "#e81898", "#f01858"]

  return (

    <main className="flex h-screen flex-col overflow-hidden bg-[#b9d1ea] pr-[5px] pb-[3px] pl-0.5 font-['Noto_Sans_CJK_SC',sans-serif] text-xs text-black">

      <Gradients />

      {/* Title bar */}
      <header className="-mr-[5px] -ml-0.5 flex h-7 shrink-0 items-center bg-linear-to-b from-[#9ab5d2] to-[#b5cbe2] pt-[5px] pr-[7px] pl-1.5">
        <svg viewBox="0 0 36 48" className="h-4 w-3" aria-hidden="true">
          <rect x="2" y="2" width="32" height="44" rx="3" fill="#f8d8dc" stroke="#d01830" strokeWidth="4" />
          <text x="18" y="25" textAnchor="middle" fontSize="24" fontFamily="Liberation Sans, sans-serif" fill="#c01028">R</text>
          <text x="18" y="41" textAnchor="middle" fontSize="15" fontWeight="bold" fontFamily="Liberation Sans, sans-serif" fill="#c01028">CAD</text>
        </svg>
        <h1 className="ml-1.5 flex-1 font-['Noto_Sans','Noto_Sans_CJK_SC',sans-serif] whitespace-nowrap">D:\RichpeaceCAD (企业单机版) V10.0\未命名.DGS - 富怡CAD</h1>
        <div className="flex gap-0.5">
          <button aria-label="最小化" className="flex h-[17px] w-[31px] items-center justify-center rounded-xs border border-[#5c738f] bg-linear-to-b from-[#cddff0] from-45% to-[#9eb9d5] to-50% shadow-[inset_0_0_0_1px_#dceaf6]">
            <span className="mt-1 h-[5px] w-[11px] rounded-xs border border-[#535f70] bg-white" />
          </button>
          <button aria-label="最大化" className="flex h-[17px] w-[31px] items-center justify-center rounded-xs border border-[#5c738f] bg-linear-to-b from-[#cddff0] from-45% to-[#9eb9d5] to-50% shadow-[inset_0_0_0_1px_#dceaf6]">
            <svg viewBox="0 0 11 9" className="h-[9px] w-[11px]" aria-hidden="true">
              <rect x="0.5" y="0.5" width="10" height="8" rx="1" fill="#fff" stroke="#535f70" />
              <rect x="3.5" y="3.5" width="4" height="2" fill="#a8bfd6" stroke="#535f70" />
            </svg>
          </button>
          <button aria-label="关闭" className="flex h-[17px] w-[31px] items-center justify-center rounded-xs border border-[#6c2430] bg-linear-to-b from-[#dda49a] from-45% to-[#b94634] to-50% shadow-[inset_0_0_0_1px_#e8b8a8]">
            <svg viewBox="0 0 12 10" className="h-[10px] w-3" aria-hidden="true">
              <path d="M2 1L10 9M10 1L2 9" stroke="#5c3840" strokeWidth="4" />
              <path d="M2.5 1.5L9.5 8.5M9.5 1.5L2.5 8.5" stroke="#fff" strokeWidth="2.4" />
            </svg>
          </button>
        </div>
      </header>

      {/* Menus */}
      <nav className="flex h-[31px] shrink-0 items-center gap-[13px] bg-[#eef0fc] pb-0.5 pl-[15px]">
        {menus.map((m) => (
          <button key={m} className="whitespace-nowrap">
            {m.slice(0, 2)}
            <span className="text-[11px]">{m.slice(2)}</span>
          </button>
        ))}
      </nav>

      {/* Toolbar */}
      <div className="flex h-[33px] shrink-0 items-center bg-linear-to-b from-[#f7f9ff] to-[#b5b4cc] pb-px pl-[9px]">
        {fileTools.map((t) => (
          <button key={t.name} aria-label={t.name}><Art>{t.art}</Art></button>
        ))}
        <button aria-label="撤消"><Art>{undoArt}</Art></button>
        <button aria-label="撤消列表" className="flex w-[13px] justify-center"><Caret gray /></button>
        <button aria-label="重做"><Art>{redoArt}</Art></button>
        <button aria-label="重做列表" className="flex w-[13px] justify-center"><Caret gray /></button>
        {viewTools.map((t) => (
          <button key={t.name} aria-label={t.name} className={t.on ? "bg-[#dcecfc] outline outline-[#4898e0] -outline-offset-1" : ""}>
            <Art>{t.art}</Art>
          </button>
        ))}
        <button aria-label="颜色设置">
          <svg viewBox="0 0 102 90" className="h-[30px] w-[34px]" aria-hidden="true">
            {wheel.map((c, i) => (
              <path key={c} d="M51 19A26 26 0 0 1 65 23" fill="none" stroke={c} strokeWidth="13" transform={`rotate(${i * 30 + 75} 51 45)`} />
            ))}
            <circle cx="51" cy="45" r="32" fill="none" stroke="#556" strokeWidth="1" />
            <circle cx="51" cy="45" r="19" fill="#f4f4fa" />
          </svg>
        </button>
        <input
          aria-label="等份数"
          value={step}
          onChange={(e) => setStep(e.target.value)}
          className="ml-[3px] h-5 w-6 bg-[#c8ecc8] px-px pb-1 font-['Liberation_Mono',monospace] text-sm"
        />
        <button aria-label="线颜色" className="ml-2 h-[22px] w-7 bg-black" />
        <button aria-label="颜色列表" className="flex w-[17px] justify-center"><Caret /></button>
        <button aria-label="线类型" className="flex h-5 w-[52px] items-center"><span className="h-px w-full bg-black" /></button>
        <button aria-label="线类型列表" className="flex w-[15px] justify-end pr-px"><Caret /></button>
        <button aria-label="播放演示">
          <Art>
            <rect x="14" y="18" width="74" height="52" fill="#080808" />
            <P d="M18 24H86M18 65H86" c="#fff" w={6} dash="6 6" />
            <rect x="17" y="30" width="32" height="29" fill="#008000" />
            <rect x="52" y="30" width="33" height="29" fill="#008000" />
          </Art>
        </button>
        <button aria-label="帮助">
          <Art>
            <P d="M16 18L25 59L35 52L44 74L54 69L45 48L58 45Z" c="#92929e" f="#c4c4d0" />
            <text x="69" y="74" textAnchor="middle" fontSize="78" fontWeight="bold" fontFamily="Liberation Sans, sans-serif" fill="#c8c8d2" stroke="#9898a4" strokeWidth="3">?</text>
          </Art>
        </button>
      </div>

      {/* Workspace */}
      <div className="flex min-h-0 flex-1">

        <aside className="flex w-[184px] shrink-0 flex-col bg-[#eef0fc]">
          <div className="flex h-5 w-[180px] shrink-0 items-center bg-linear-to-r from-[#d2dfec] to-[#c2d2e2] pr-0.5 pl-1 text-[#4c545c]">
            <h2 className="flex-1">工具栏</h2>
            <button aria-label="固定" className="flex size-4 items-center justify-center">
              <svg viewBox="0 0 8 9" className="h-[9px] w-2" aria-hidden="true">
                <path d="M2.5 0.5V5.5M2 0.5H6M5 0V5.5M6 0V5.5M0.5 5.5H7.5M4 6V9" stroke="#000" fill="none" />
              </svg>
            </button>
            <button aria-label="关闭工具栏" className="flex size-4 items-center justify-center">
              <svg viewBox="0 0 8 8" className="size-2" aria-hidden="true">
                <path d="M0.5 0.5L7.5 7.5M7.5 0.5L0.5 7.5" stroke="#000" strokeWidth="1.6" />
              </svg>
            </button>
          </div>
          <div className="flex w-[180px] flex-1 flex-col gap-0.5 border border-[#9498ac] bg-white px-[3px] pt-0.5 pb-px">
            <Palette tools={drawTools} active={tool} onPick={setTool} pad="pt-0.5" />
            <Palette tools={patternTools} active={tool} onPick={setTool} />
            <Palette tools={gradeTools} active={tool} onPick={setTool} grow />
          </div>
          <div className="flex h-[25px] shrink-0 items-start pl-0.5">
            {["工具栏", "自定义工具"].map((name) => (
              <button
                key={name}
                onClick={() => setTab(name)}
                className={`border-r border-b border-[#8c8c98] px-1.5 pt-1 leading-4 whitespace-nowrap ${tab === name ? "h-[22px] bg-white" : "h-[21px] bg-linear-to-b from-[#d8d8dc] to-[#f8f8f8] text-[#77777f]"}`}
              >
                {name}
              </button>
            ))}
          </div>
        </aside>

        <section className="flex min-w-0 flex-1 flex-col bg-[#adc3cf]">
          <div className="h-[79px] shrink-0 border-t-2 border-r-2 border-b-2 border-l-2 border-t-[#706c6c] border-r-white border-b-white border-l-[#77777c] bg-[#8fa5bc]" />
          <div className="relative flex h-[21px] shrink-0 items-end">
            <Ruler />
            <span className="absolute top-1 right-0 bg-[#adc3cf] font-['Liberation_Mono',monospace] text-[10px] leading-3">cm</span>
          </div>
          <div className="flex min-h-0 flex-1">
            <Ruler vertical />
            <div className="flex-1 border-t-2 border-r-2 border-b-2 border-l-2 border-t-[#6c6c70] border-r-white border-b-white border-l-[#6c6c70] bg-[#82a1ba]" />
          </div>
        </section>

      </div>

      {/* Status bar */}
      <footer className="flex h-5 shrink-0 items-center border-t border-[#8c8c94] bg-[#f0eeee] pl-[3px]">
        <p className="flex-1 truncate">1.画线;2.画矩形;3.右键单击曲线,进入调整状态;4.Shift+右键单击曲线,调整长度;5.单击曲线并拖动,进入平行线功能</p>
        <span className="w-[43px]">0/0</span>
        <span className="flex w-[18px] justify-center border-x border-[#d8d4d4]">
          <svg viewBox="0 0 10 11" className="h-[11px] w-[10px]" aria-hidden="true">
            <path d="M0 0h3v3H0z" fill="#b07850" />
            <path d="M7 0h3v3H7z" fill="#18d820" />
            <path d="M0 7h3v3H0z" fill="#1818c8" />
            <path d="M7 7h3v3H7z" fill="#d82030" />
          </svg>
        </span>
        <span className="w-7 border-r border-[#d8d4d4] pl-1">cm</span>
        <svg viewBox="0 0 16 12" className="h-3 w-4" aria-hidden="true">
          <path d="M12 2h2v2h-2zM8 6h2v2H8zM12 6h2v2h-2zM4 10h2v2H4zM8 10h2v2H8zM12 10h2v2h-2z" fill="#c0b8b8" />
        </svg>
      </footer>

    </main>

  )

}
